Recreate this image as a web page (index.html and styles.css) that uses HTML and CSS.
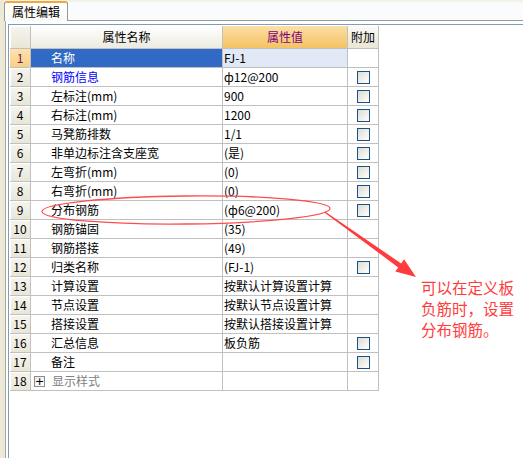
FILE: index.html
```html
<!DOCTYPE html>
<html>
<head>
<meta charset="utf-8">
<link rel="stylesheet" href="styles.css">
</head>
<body>
<div class="topbar">
  <div class="tab-lead"></div>
  <div class="tab">属性编辑</div>
  <div class="tab-fill"></div>
</div>
<div class="main">
  <div class="rail"></div>
  <div class="pane">
    <div class="grid">
      <div class="c num head"></div>
      <div class="c h-name">属性名称</div>
      <div class="c h-val">属性值</div>
      <div class="c h-add">附加</div>

      <div class="c num sel-num">1</div>
      <div class="c name sel-name">名称</div>
      <div class="c val sel-val">FJ-1</div>
      <div class="c add"></div>

      <div class="c num">2</div>
      <div class="c name blue">钢筋信息</div>
      <div class="c val">ф12@200</div>
      <div class="c add"><span class="box"></span></div>

      <div class="c num">3</div>
      <div class="c name">左标注(mm)</div>
      <div class="c val">900</div>
      <div class="c add"><span class="box"></span></div>

      <div class="c num">4</div>
      <div class="c name">右标注(mm)</div>
      <div class="c val">1200</div>
      <div class="c add"><span class="box"></span></div>

      <div class="c num">5</div>
      <div class="c name">马凳筋排数</div>
      <div class="c val">1/1</div>
      <div class="c add"><span class="box"></span></div>

      <div class="c num">6</div>
      <div class="c name">非单边标注含支座宽</div>
      <div class="c val">(是)</div>
      <div class="c add"><span class="box"></span></div>

      <div class="c num">7</div>
      <div class="c name">左弯折(mm)</div>
      <div class="c val">(0)</div>
      <div class="c add"><span class="box"></span></div>

      <div class="c num">8</div>
      <div class="c name">右弯折(mm)</div>
      <div class="c val">(0)</div>
      <div class="c add"><span class="box"></span></div>

      <div class="c num">9</div>
      <div class="c name">分布钢筋</div>
      <div class="c val">(ф6@200)</div>
      <div class="c add"><span class="box"></span></div>

      <div class="c num">10</div>
      <div class="c name">钢筋锚固</div>
      <div class="c val">(35)</div>
      <div class="c add"></div>

      <div class="c num">11</div>
      <div class="c name">钢筋搭接</div>
      <div class="c val">(49)</div>
      <div class="c add"></div>

      <div class="c num">12</div>
      <div class="c name">归类名称</div>
      <div class="c val">(FJ-1)</div>
      <div class="c add"><span class="box"></span></div>

      <div class="c num">13</div>
      <div class="c name">计算设置</div>
      <div class="c val">按默认计算设置计算</div>
      <div class="c add"></div>

      <div class="c num">14</div>
      <div class="c name">节点设置</div>
      <div class="c val">按默认节点设置计算</div>
      <div class="c add"></div>

      <div class="c num">15</div>
      <div class="c name">搭接设置</div>
      <div class="c val">按默认搭接设置计算</div>
      <div class="c add"></div>

      <div class="c num">16</div>
      <div class="c name">汇总信息</div>
      <div class="c val">板负筋</div>
      <div class="c add"><span class="box"></span></div>

      <div class="c num">17</div>
      <div class="c name">备注</div>
      <div class="c val"></div>
      <div class="c add"><span class="box"></span></div>

      <div class="c num">18</div>
      <div class="c name group"><span class="plus">+</span>显示样式</div>
      <div class="c val"></div>
      <div class="c add"></div>
    </div>
  </div>
</div>
<svg class="marks" width="523" height="458" viewBox="0 0 523 458">
  <ellipse cx="186" cy="210" rx="144" ry="14" fill="none" stroke="#ff4d4d" stroke-width="1.3" transform="rotate(-0.6 186 210)"/>
  <polygon points="324.4,212.4 398.25,267.4 395.3,271.5 416,277 404.1,259.3 401.15,263.4 325,211.6" fill="#ff3b3b"/>
</svg>
<div class="note">可以在定义板<br>负筋时，设置<br>分布钢筋。</div>
</body>
</html>
```

FILE: styles.css
```css
* { box-sizing: border-box; }
html, body { margin: 0; padding: 0; }
body {
  width: 523px;
  height: 458px;
  overflow: hidden;
  background: #ffffff;
  font-family: "Noto Sans CJK SC", "Liberation Sans", sans-serif;
  font-size: 12px;
  color: #000;
  position: relative;
  display: flex;
  flex-direction: column;
}
.topbar {
  display: flex;
  height: 21px;
  flex: none;
  background: #f4f1e6;
}
.tab-lead {
  width: 4px;
  background: #ece9d8;
}
.tab {
  width: 64px;
  height: 20px;
  margin-top: 1px;
  border-top: 2px solid #f2a93b;
  border-left: 1px solid #919b9c;
  border-right: 1px solid #919b9c;
  border-radius: 3px 3px 0 0;
  background: linear-gradient(#ffffff, #f9f9f6);
  padding-left: 7px;
  line-height: 17px;
  font-size: 12px;
}
.tab-fill {
  flex: 1;
  margin-top: 2px;
  background: #fafbfd;
  border-bottom: 1px solid #919b9c;
}
.main {
  flex: 1;
  display: flex;
}
.rail {
  width: 6px;
  background: #ece9d8;
  border-right: 1px solid #a9a89a;
}
.pane {
  flex: 1;
  margin-left: 2px;
  margin-top: 3px;
  border-left: 1px solid #7f9db9;
  border-top: 1px solid #7f9db9;
  padding: 1px;
  background: #fff;
}
.grid {
  display: grid;
  grid-template-columns: 21px 192px 125px 31px;
  width: 369px;
}
.c {
  height: 19px;
  line-height: 18px;
  border-right: 1px solid #c0c0c0;
  border-bottom: 1px solid #c0c0c0;
  white-space: nowrap;
  overflow: hidden;
}
.num {
  text-align: center;
  background: linear-gradient(#f6f5ee, #e9e6d8);
  box-shadow: inset 1px 1px 0 #ffffff;
  font-size: 12px;
}
.head, .h-name, .h-val, .h-add {
  height: 23px;
  line-height: 22px;
  text-align: center;
}
.h-name {
  background: linear-gradient(#ffffff, #ecebe0);
}
.h-val {
  background: linear-gradient(#fcdfa6, #f4c262);
  color: #800080;
}
.h-add {
  background: linear-gradient(#fbfaf5, #e9e6d6);
}
.name {
  padding-left: 20px;
}
.val {
  padding-left: 1px;
}
.add {
  display: flex;
  align-items: center;
  justify-content: center;
}
.sel-num {
  background: linear-gradient(#fde3ad, #f8cf86);
  color: #7a1050;
  box-shadow: none;
}
.sel-name {
  background: #316ac5;
  color: #ffffff;
}
.sel-val {
  background: #e0e9f5;
}
.blue {
  color: #0000ff;
}
.group {
  padding-left: 3px;
  color: #808080;
  display: flex;
  align-items: center;
}
.plus {
  width: 11px;
  height: 11px;
  border: 1px solid #8c8c8c;
  background: linear-gradient(135deg, #ececec, #ffffff);
  color: #000;
  font-family: "DejaVu Sans", sans-serif;
  font-size: 11px;
  line-height: 9px;
  text-align: center;
  margin-right: 7px;
}
.box {
  width: 13px;
  height: 13px;
  border: 1px solid #1c5180;
  background: linear-gradient(135deg, #dcdcd4, #ffffff);
}
.marks {
  position: absolute;
  left: 0;
  top: 0;
  pointer-events: none;
}
.note {
  position: absolute;
  left: 421px;
  top: 277px;
  color: #ff3c3c;
  font-size: 15.5px;
  line-height: 21px;
  white-space: nowrap;
}
```
